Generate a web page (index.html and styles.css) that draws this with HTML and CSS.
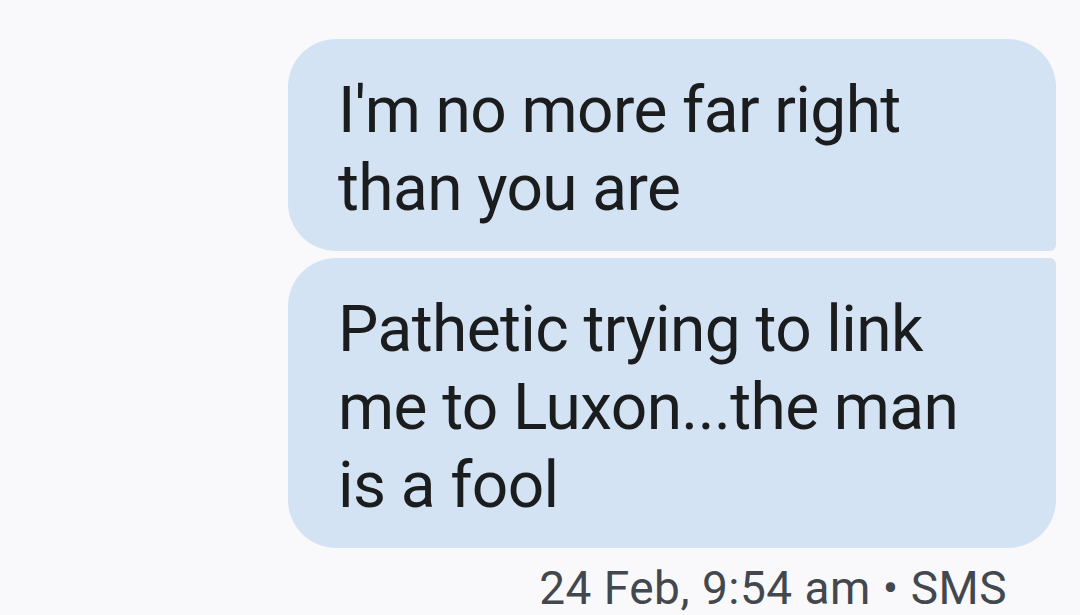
FILE: index.html
```html
<!DOCTYPE html>
<html>
<head>
<meta charset="utf-8">
<link rel="stylesheet" href="styles.css">
</head>
<body>
<div class="thread">
  <div class="bubble first">I'm no more far right<br>than you are</div>
  <div class="bubble last">Pathetic trying to link<br>me to Luxon...the man<br>is a fool</div>
  <div class="meta">24 Feb, 9:54 am • SMS</div>
</div>
</body>
</html>
```
FILE: styles.css
```css
html, body {
  margin: 0;
  padding: 0;
  background: #f9f9fc;
  width: 1080px;
  height: 615px;
  overflow: hidden;
}
.thread {
  display: flex;
  flex-direction: column;
  align-items: flex-end;
  gap: 7px;
  padding: 39px 24px 0 0;
  font-family: Roboto, "Noto Sans", sans-serif;
}
.bubble {
  box-sizing: border-box;
  width: 768px;
  background: #d3e3f4;
  color: #1b1c1e;
  font-size: 64px;
  line-height: 78px;
  letter-spacing: -0.6px;
  padding: 33px 40px 23px 50px;
}
.first {
  border-radius: 48px 48px 6px 48px;
}
.last {
  border-radius: 48px 6px 48px 48px;
}
.meta {
  margin-top: 5px;
  margin-right: 49px;
  font-size: 46px;
  line-height: 56px;
  letter-spacing: 0.5px;
  color: #43474e;
}
```
